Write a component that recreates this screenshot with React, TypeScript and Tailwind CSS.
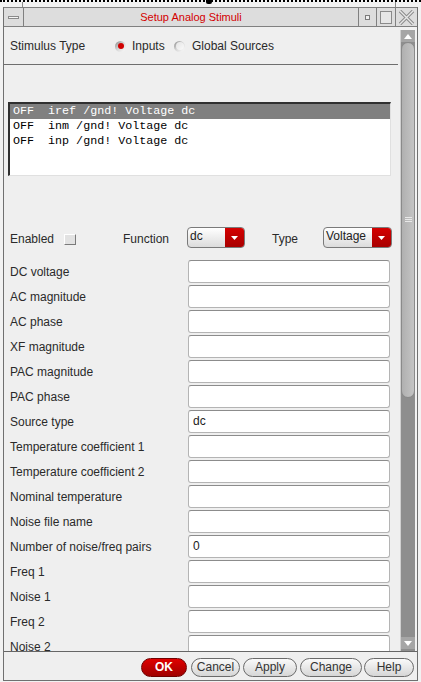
import React from "react";

const fields: { label: string; value?: string }[] = [
  { label: "DC voltage" },
  { label: "AC magnitude" },
  { label: "AC phase" },
  { label: "XF magnitude" },
  { label: "PAC magnitude" },
  { label: "PAC phase" },
  { label: "Source type", value: "dc" },
  { label: "Temperature coefficient 1" },
  { label: "Temperature coefficient 2" },
  { label: "Nominal temperature" },
  { label: "Noise file name" },
  { label: "Number of noise/freq pairs", value: "0" },
  { label: "Freq 1" },
  { label: "Noise 1" },
  { label: "Freq 2" },
  { label: "Noise 2" },
];

const stimuli = [
  "OFF  iref /gnd! Voltage dc",
  "OFF  inm /gnd! Voltage dc",
  "OFF  inp /gnd! Voltage dc",
];

const Radio = ({ checked }: { checked?: boolean }) => (
  <span className="flex h-[11px] w-[11px] items-center justify-center rounded-full bg-gradient-to-br from-[#8a8a8a] via-[#d8d8d8] to-[#ffffff]">
    <span
      className={
        checked
          ? "h-[6px] w-[6px] rounded-full bg-[#d00000]"
          : "h-[8px] w-[8px] rounded-full bg-gradient-to-br from-[#e4e4e4] to-[#fafafa]"
      }
    />
  </span>
);

const Dropdown = ({ text, width }: { text: string; width: string }) => (
  <div
    className={`flex h-[21px] ${width} overflow-hidden rounded-[4px] border border-[#7a7a7a] bg-gradient-to-b from-[#ffffff] to-[#dcdcdc]`}
  >
    <span className="flex-1 pl-[2px] text-[12px] leading-[17px] text-[#222]">{text}</span>
    <span className="flex w-[19px] items-center justify-center bg-gradient-to-b from-[#d40000] to-[#a80000]">
      <svg width="7" height="4" viewBox="0 0 7 4">
        <path d="M0 0 H7 L3.5 4 Z" fill="#ffffff" />
      </svg>
    </span>
  </div>
);

const Btn = ({ text, width, primary }: { text: string; width: string; primary?: boolean }) => (
  <button
    className={
      primary
        ? `h-[19px] ${width} rounded-full border border-[#700000] bg-gradient-to-b from-[#e00000] to-[#a00000] text-[12px] font-bold leading-[17px] text-white`
        : `h-[19px] ${width} rounded-full border border-[#6a6a6a] bg-gradient-to-b from-[#fafafa] to-[#d6d6d6] text-[12px] leading-[17px] text-[#333]`
    }
  >
    {text}
  </button>
);

export default function App() {
  return (
    <div className="flex h-[682px] w-[421px] flex-col overflow-hidden bg-[#f2f2f2] font-['Liberation_Sans',Arial,sans-serif]">
      {/* window manager strip */}
      <div className="flex h-[7px] border-t-2 border-dotted border-black">
        <div className="w-[23px] border-r border-[#8a8a8a]" />
        <div className="flex flex-1 justify-center">
          <div className="mt-[-2px] h-[4px] w-[6px] rounded-b-[2px] bg-black" />
        </div>
        <div className="w-[26px] border-l border-[#8a8a8a]" />
      </div>

      <div className="mx-[3px] flex h-[674px] flex-col border-x border-b border-[#707070]">
        {/* title bar */}
        <div className="flex h-[20px] border-y border-[#808080] bg-[#dddddd]">
          <div className="flex w-[20px] items-center justify-center border-r border-[#808080]">
            <span className="h-[3px] w-[11px] border border-[#8a8a8a] bg-[#f4f4f4]" />
          </div>
          <div className="flex-1 text-center text-[11px] leading-[18px] text-[#d40000]">
            Setup Analog Stimuli
          </div>
          <div className="flex w-[18px] items-center justify-center border-l border-[#808080]">
            <span className="h-[5px] w-[5px] border border-[#7a7a7a] bg-[#f0f0f0]" />
          </div>
          <div className="flex w-[19px] items-center justify-center border-l border-[#808080]">
            <span className="h-[13px] w-[12px] border border-[#8a8a8a] bg-[#e6e6e6]" />
          </div>
          <div className="flex w-[22px] items-center justify-center border-l border-[#808080]">
            <svg width="17" height="15" viewBox="0 0 17 15">
              <path d="M2 1 L15 14 M15 1 L2 14" stroke="#8c8c8c" strokeWidth="3.4" />
              <path d="M2 1 L15 14 M15 1 L2 14" stroke="#e8e8e8" strokeWidth="1.4" />
            </svg>
          </div>
        </div>

        {/* body */}
        <div className="flex h-[625px] border-b border-[#666]">
          <div className="flex flex-1 flex-col overflow-hidden bg-[#efefef]">
            <div className="flex h-[37px] shrink-0 items-center pl-[6px] pt-[1px] text-[12px] text-[#2a2a2a]">
              <span className="w-[105px]">Stimulus Type</span>
              <Radio checked />
              <span className="ml-[6px] w-[32px]">Inputs</span>
              <span className="ml-[10px]">
                <Radio />
              </span>
              <span className="ml-[7px]">Global Sources</span>
            </div>
            <div className="mr-[2px] h-px shrink-0 bg-[#6e6e6e]" />

            {/* stimuli list */}
            <div className="ml-[4px] mr-[9px] mt-[37px] h-[74px] shrink-0 border-l-2 border-t-2 border-[#303030] border-b border-r border-b-[#e0e0e0] border-r-[#e0e0e0] bg-white font-['Liberation_Mono',monospace] text-[11.7px]">
              {stimuli.map((s, i) => (
                <div
                  key={i}
                  className={
                    i === 0
                      ? "h-[15px] whitespace-pre bg-[#808080] pl-[3px] leading-[15px] text-white"
                      : "h-[15px] whitespace-pre pl-[3px] leading-[15px] text-black"
                  }
                >
                  {s}
                </div>
              ))}
            </div>

            {/* enabled / function / type */}
            <div className="mt-[51px] flex h-[21px] shrink-0 items-center pl-[6px] text-[12px] text-[#2a2a2a]">
              <span className="mt-[3px] w-[54px]">Enabled</span>
              <span className="mt-[3px] h-[11px] w-[12px] border border-b-[#7a7a7a] border-r-[#7a7a7a] border-l-white border-t-white bg-[#e2e2e2]" />
              <span className="ml-[47px] mt-[3px] w-[64px]">Function</span>
              <Dropdown text="dc" width="w-[58px]" />
              <span className="ml-[27px] mt-[3px] w-[51px]">Type</span>
              <Dropdown text="Voltage" width="w-[69px]" />
            </div>

            {/* fields */}
            <div className="mt-[12px] flex flex-col gap-[2px]">
              {fields.map((f) => (
                <div key={f.label} className="flex h-[23px] shrink-0 items-center pl-[6px] pr-[10px] text-[12px] text-[#2a2a2a]">
                  <span className="flex-1">{f.label}</span>
                  <div className="h-[23px] w-[202px] rounded-[3px] border border-[#b4b4b4] border-t-[#8c8c8c] bg-white pl-[4px] text-[12px] leading-[21px] text-[#222]">
                    {f.value}
                  </div>
                </div>
              ))}
            </div>
          </div>

          {/* scrollbar */}
          <div className="flex w-[15px] flex-col pt-[3px]">
            <div className="flex flex-1 flex-col border-l border-[#d0d0d0] bg-[#8e8e8e]">
              <div className="flex h-[12px] items-center justify-center bg-[#a6a6a6]">
                <svg width="8" height="5" viewBox="0 0 8 5">
                  <path d="M0 5 H8 L4 0 Z" fill="#ffffff" />
                </svg>
              </div>
              <div className="flex h-[356px] flex-col items-center justify-center rounded-[7px] border border-[#8a8a8a] bg-gradient-to-r from-[#b0b0b0] to-[#c4c4c4]">
                <div className="mt-[-2px] flex flex-col gap-[1px]">
                  <span className="h-px w-[7px] bg-[#e8e8e8]" />
                  <span className="h-px w-[7px] bg-[#e8e8e8]" />
                  <span className="h-px w-[7px] bg-[#e8e8e8]" />
                </div>
              </div>
              <div className="flex-1" />
              <div className="flex h-[12px] items-center justify-center bg-[#a6a6a6]">
                <svg width="8" height="5" viewBox="0 0 8 5">
                  <path d="M0 0 H8 L4 5 Z" fill="#ffffff" />
                </svg>
              </div>
              <div className="h-[2px]" />
            </div>
          </div>
          <div className="w-[2px]" />
        </div>

        {/* button bar */}
        <div className="flex h-[28px] items-center justify-end bg-[#efefef] pr-[3px] pt-[2px]">
          <Btn text="OK" width="w-[46px]" primary />
          <span className="ml-[4px]" />
          <Btn text="Cancel" width="w-[49px]" />
          <span className="ml-[3px]" />
          <Btn text="Apply" width="w-[54px]" />
          <span className="ml-[3px]" />
          <Btn text="Change" width="w-[62px]" />
          <span className="ml-[2px]" />
          <Btn text="Help" width="w-[50px]" />
        </div>
      </div>
    </div>
  );
}
